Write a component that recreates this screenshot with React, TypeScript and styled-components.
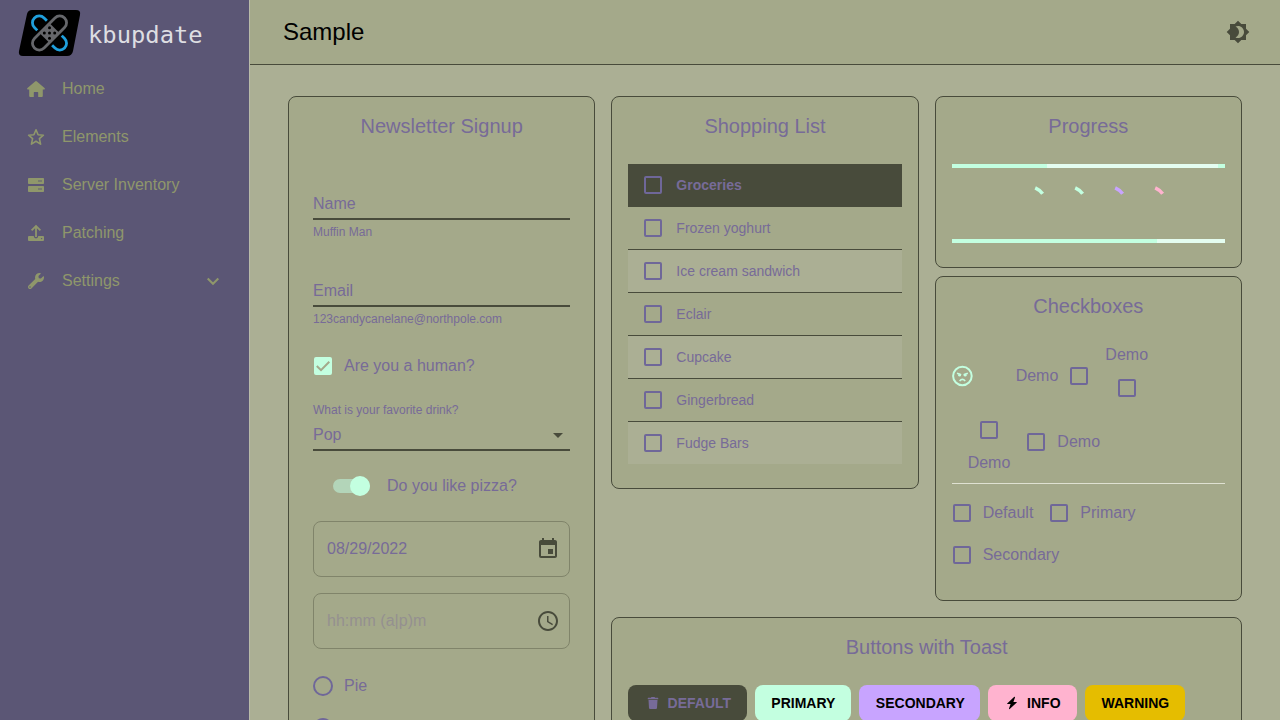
import React from "react";
import styled, { createGlobalStyle } from "styled-components";
import { MdBrightness4, MdEvent, MdAccessTime, MdArrowDropDown } from "react-icons/md";
import { FaWrench, FaTrash } from "react-icons/fa";

const c = {
  side: "#5b5675",
  sideText: "#8f976b",
  page: "#abaf94",
  card: "#a4a98a",
  dark: "#484b3b",
  text: "#776b98",
  control: "#6f6799",
  mint: "#c3ffe0",
  violet: "#c8a4ff",
  pink: "#ffb3cf",
};

const Global = createGlobalStyle`
  * { box-sizing: border-box; }
  body { margin: 0; background: ${c.page}; font-family: "Liberation Sans", Arial, sans-serif; overflow: hidden; }
`;

const Shell = styled.div`
  display: flex;
  height: 720px;
  overflow: hidden;
  color: ${c.text};
  font-size: 16px;
  line-height: 24px;
`;

const Sidebar = styled.aside`
  width: 250px;
  flex: none;
  background: ${c.side};
  border-right: 1px solid #b9bba9;
`;

const Brand = styled.div`
  display: flex;
  align-items: center;
  gap: 7px;
  height: 65px;
  padding: 1px 0 0 18px;
  color: #dedee2;
  font: 23.8px/28px "DejaVu Sans Mono", monospace;
`;

const BrandName = styled.span`
  padding-top: 3px;
`;

const NavItem = styled.div`
  display: flex;
  align-items: center;
  height: 48px;
  padding: 0 27px 0 26px;
  color: ${c.sideText};
  svg { flex: none; }
`;

const NavLabel = styled.span`
  flex: 1;
  padding-left: 16px;
`;

const IconSlot = styled.span`
  display: flex;
  align-items: center;
  justify-content: center;
  width: 20px;
  height: 20px;
`;

const Main = styled.main`
  flex: 1;
  min-width: 0;
`;

const TopBar = styled.header`
  display: flex;
  align-items: center;
  justify-content: space-between;
  height: 65px;
  padding: 0 30px 1px 33px;
  background: ${c.card};
  border-bottom: 1px solid ${c.dark};
  color: #000;
  font-size: 24px;
  svg { color: ${c.dark}; }
`;

const Board = styled.div`
  display: grid;
  grid-template-columns: 307.33px 630.67px;
  gap: 16px;
  align-items: start;
  padding: 31px 38px 0;
`;

const Right = styled.div`
  display: flex;
  flex-direction: column;
  gap: 16px;
`;

const Pair = styled.div`
  display: grid;
  grid-template-columns: 1fr 1fr;
  gap: 16px;
  align-items: start;
`;

const Stack = styled.div`
  display: flex;
  flex-direction: column;
  gap: 8px;
`;

const Card = styled.section<{ $h: number; $pad?: number }>`
  height: ${(p) => p.$h}px;
  padding: 13px ${(p) => p.$pad ?? 16}px 0;
  background: ${c.card};
  border: 1px solid ${c.dark};
  border-radius: 8px;
`;

const CardTitle = styled.h2<{ $gap?: number }>`
  margin: 0 0 ${(p) => p.$gap ?? 22}px;
  font-size: 20px;
  font-weight: 400;
  line-height: 32px;
  text-align: center;
`;

const Field = styled.div`
  height: 87px;
  padding-top: 27px;
`;

const FieldLine = styled.div`
  display: flex;
  justify-content: space-between;
  align-items: center;
  height: 29px;
  padding-bottom: 2px;
  border-bottom: 2px solid ${c.dark};
  svg { color: ${c.dark}; }
`;

const Small = styled.div`
  padding: 2px 0;
  font-size: 12px;
  line-height: 20px;
`;

const HumanRow = styled.div`
  display: flex;
  padding: 7px 0 11px;
`;

const RadioGroup = styled.div`
  display: flex;
  flex-direction: column;
  padding-top: 16px;
`;

const Choice = styled.label<{ $place?: "end" | "start" | "top" | "bottom" }>`
  display: inline-flex;
  align-items: center;
  flex-direction: ${(p) =>
    ({ end: "row", start: "row-reverse", top: "column-reverse", bottom: "column" })[p.$place ?? "end"]};
  margin: ${(p) =>
    ({ end: "0 16px 0 -11px", start: "0 -11px 0 17px", top: "0 16px", bottom: "0 16px" })[p.$place ?? "end"]};
`;

const Hit = styled.span`
  display: flex;
  align-items: center;
  justify-content: center;
  width: 42px;
  height: 42px;
`;

const Box = styled.span<{ $on?: boolean }>`
  display: flex;
  width: 18px;
  height: 18px;
  border: 2px solid ${(p) => (p.$on ? c.mint : c.control)};
  border-radius: 2px;
  background: ${(p) => (p.$on ? c.mint : "transparent")};
`;

const Radio = styled.span`
  width: 20px;
  height: 20px;
  border: 2px solid ${c.control};
  border-radius: 50%;
`;

const SwitchRow = styled.div`
  display: flex;
  align-items: center;
  gap: 17px;
  height: 38px;
  margin-top: 16px;
  padding-left: 20px;
`;

const Track = styled.span`
  display: flex;
  align-items: center;
  justify-content: flex-end;
  width: 37px;
  height: 14px;
  border-radius: 7px;
  background: #b3d5b9;
`;

const Thumb = styled.span`
  width: 20px;
  height: 20px;
  flex: none;
  border-radius: 50%;
  background: ${c.mint};
`;

const Outlined = styled.div<{ $empty?: boolean }>`
  display: flex;
  align-items: center;
  justify-content: space-between;
  height: 56px;
  margin-top: 16px;
  padding: 0 9px 0 13px;
  border: 1px solid #80846a;
  border-radius: 8px;
  color: ${(p) => (p.$empty ? "#949090" : c.text)};
  svg { color: ${c.dark}; }
`;

const ListRow = styled.div<{ $alt?: boolean; $head?: boolean }>`
  display: flex;
  align-items: center;
  gap: 14px;
  height: 43px;
  padding-left: 16px;
  font-size: 14px;
  font-weight: ${(p) => (p.$head ? 700 : 400)};
  background: ${(p) => (p.$head ? c.dark : p.$alt ? c.page : "transparent")};
  border-bottom: 1px solid ${c.dark};
  &:last-child { height: 42px; border-bottom: 0; }
`;

const Bar = styled.div`
  display: flex;
  height: 4px;
  background: #e4fdf0;
`;

const Fill = styled.span<{ $w: number }>`
  width: ${(p) => p.$w}px;
  background: ${c.mint};
`;

const Spring = styled.span`
  flex: 1;
`;

const Spinners = styled.div`
  display: flex;
  justify-content: center;
  height: 40px;
  margin: 16px 0 15px;
`;

const Choices = styled.div`
  display: flex;
  flex-wrap: wrap;
`;

const Divider = styled.div`
  height: 1px;
  margin: 8px 0;
  background: #dfe1d2;
`;

const Buttons = styled.div`
  display: flex;
  gap: 8px;
`;

const Button = styled.button<{ $bg: string; $fg?: string; $w: number; $nudge?: number }>`
  display: flex;
  align-items: center;
  justify-content: center;
  gap: 9px;
  width: ${(p) => p.$w}px;
  height: 36px;
  padding: 0 0 0 ${(p) => p.$nudge ?? 0}px;
  border: 0;
  border-radius: 8px;
  background: ${(p) => p.$bg};
  color: ${(p) => p.$fg ?? "#000"};
  font: 700 14px/24px "Liberation Sans", Arial, sans-serif;
`;

const Logo = () => (
  <svg width="63" height="48" viewBox="0 0 63 48">
    <path d="M14 1H58Q63 1 62 6L55 42Q54 47 49 47H5Q0 47 1 42L9 5Q10 1 14 1Z" fill="#000" />
    <g fill="none" strokeWidth="2.8">
      <g transform="rotate(45 31.5 24)" stroke="#1f9fdc">
        <path d="M21 17.2H17A6.8 6.8 0 0 0 17 30.8H21" />
        <path d="M42 17.2H46A6.8 6.8 0 0 1 46 30.8H42" />
      </g>
      <g transform="rotate(-45 31.5 24)" stroke="#66676b">
        <rect x="10.2" y="17.2" width="42.6" height="13.6" rx="6.8" />
        <rect x="24.5" y="17.2" width="14" height="13.6" fill="#66676b" stroke="none" />
      </g>
    </g>
    <g fill="#000">
      <circle cx="31.5" cy="18.8" r="1.5" />
      <circle cx="26.3" cy="24" r="1.5" />
      <circle cx="31.5" cy="24" r="1.5" />
      <circle cx="36.7" cy="24" r="1.5" />
      <circle cx="31.5" cy="29.2" r="1.5" />
    </g>
  </svg>
);

const HomeIcon = () => (
  <svg width="20" height="20" viewBox="0 0 20 20" fill="currentColor">
    <path d="M10 2Q10.5 2 10.9 2.4L18.8 9.3Q19.3 10.6 18 10.6H16.8V17Q16.8 18 15.8 18H12.2V13.6Q12.2 13 11.6 13H8.4Q7.8 13 7.8 13.6V18H4.2Q3.2 18 3.2 17V10.6H2Q0.7 10.6 1.2 9.3L9.1 2.4Q9.5 2 10 2Z" />
  </svg>
);

const StarIcon = () => (
  <svg width="20" height="20" viewBox="0 0 20 20" fill="none" stroke="currentColor" strokeWidth="1.6" strokeLinejoin="round">
    <path d="M10 2.8L12.1 7.7L17.4 8.2L13.4 11.7L14.6 17.1L10 14.3L5.4 17.1L6.6 11.7L2.6 8.2L7.9 7.7Z" />
  </svg>
);

const ServerIcon = () => (
  <svg width="20" height="20" viewBox="0 0 20 20">
    <rect x="2" y="3" width="16" height="6" rx="0.8" fill="currentColor" />
    <rect x="2" y="11" width="16" height="6" rx="0.8" fill="currentColor" />
    <path d="M12 5h4v2h-4zM12 13h4v2h-4z" fill="#777a6e" />
  </svg>
);

const UploadIcon = () => (
  <svg width="20" height="20" viewBox="0 0 20 20" fill="currentColor">
    <path d="M2 14Q2 13 3 13H7.7Q8 15.4 10 15.4T12.3 13H17Q18 13 18 14V17Q18 18 17 18H3Q2 18 2 17Z" />
    <path d="M10 14V3.4M5.6 7.4L10 3L14.4 7.4" fill="none" stroke="currentColor" strokeWidth="1.8" />
    <circle cx="15.6" cy="15.6" r="0.7" fill={c.side} />
  </svg>
);

const ChevronIcon = () => (
  <svg width="18" height="18" viewBox="0 0 18 18" fill="none" stroke="currentColor" strokeWidth="2">
    <path d="M3.7 6.5L9 11.8L14.3 6.5" />
  </svg>
);

const AngryIcon = () => (
  <svg width="24" height="24" viewBox="0 0 24 24" fill="none" stroke={c.mint} strokeWidth="1.6">
    <circle cx="12.4" cy="12" r="9.3" strokeWidth="2" />
    <path d="M7 9.2L11.2 10.8M17.8 9.2L13.6 10.8M9.6 17Q12.4 13.8 15.2 17" />
    <circle cx="9.6" cy="11.2" r="1.4" fill={c.mint} stroke="none" />
    <circle cx="15.2" cy="11.2" r="1.4" fill={c.mint} stroke="none" />
  </svg>
);

const BoltIcon = () => (
  <svg width="12" height="14" viewBox="0 0 12 14" fill="currentColor">
    <path d="M8.3 0.8L1.2 7.4Q0.8 8 1.6 8H4.6L3 12.6Q3 13.4 3.7 13.1L10.8 6.6Q11.2 6 10.4 6H7.4L9 1.4Q9 0.5 8.3 0.8Z" />
  </svg>
);

const Tick = () => (
  <svg width="14" height="14" viewBox="0 0 14 14" fill="none" stroke={c.card} strokeWidth="2">
    <path d="M0.8 7L5 11.2L13.3 2.8" />
  </svg>
);

const Spinner = ({ color }: { color: string }) => (
  <svg width="40" height="40" viewBox="0 0 40 40">
    <path d="M27.2 3.9A18.2 18.2 0 0 1 34.6 9.8" fill="none" stroke={color} strokeWidth="3.6" />
  </svg>
);

const nav = [
  { label: "Home", icon: <HomeIcon /> },
  { label: "Elements", icon: <StarIcon /> },
  { label: "Server Inventory", icon: <ServerIcon /> },
  { label: "Patching", icon: <UploadIcon /> },
  { label: "Settings", icon: <FaWrench size={16} />, open: true },
];

const groceries = ["Groceries", "Frozen yoghurt", "Ice cream sandwich", "Eclair", "Cupcake", "Gingerbread", "Fudge Bars"];

const Check = ({ label, place, on, icon }: {
  label?: string;
  place?: "end" | "start" | "top" | "bottom";
  on?: boolean;
  icon?: React.ReactNode;
}) => (
  <Choice $place={place}>
    <Hit>{icon ?? <Box $on={on}>{on && <Tick />}</Box>}</Hit>
    {label && <span>{label}</span>}
  </Choice>
);

export default function App() {
  return (
    <>
      <Global />
      <Shell>
        <Sidebar>
          <Brand><Logo /><BrandName>kbupdate</BrandName></Brand>
          {nav.map((n) => (
            <NavItem key={n.label}>
              <IconSlot>{n.icon}</IconSlot>
              <NavLabel>{n.label}</NavLabel>
              {n.open && <ChevronIcon />}
            </NavItem>
          ))}
        </Sidebar>
        <Main>
          <TopBar>Sample<MdBrightness4 size={24} /></TopBar>
          <Board>
            <Card $h={760} $pad={24}>
              <CardTitle>Newsletter Signup</CardTitle>
              <Field><FieldLine>Name</FieldLine><Small>Muffin Man</Small></Field>
              <Field><FieldLine>Email</FieldLine><Small>123candycanelane@northpole.com</Small></Field>
              <HumanRow><Check label="Are you a human?" on /></HumanRow>
              <Small>What is your favorite drink?</Small>
              <FieldLine>Pop<MdArrowDropDown size={24} /></FieldLine>
              <SwitchRow><Track><Thumb /></Track>Do you like pizza?</SwitchRow>
              <Outlined>08/29/2022<MdEvent size={24} /></Outlined>
              <Outlined $empty>hh:mm (a|p)m<MdAccessTime size={24} /></Outlined>
              <RadioGroup>
                <Choice><Hit><Radio /></Hit>Pie</Choice>
                <Choice><Hit><Radio /></Hit></Choice>
              </RadioGroup>
            </Card>
            <Right>
              <Pair>
                <Card $h={393}>
                  <CardTitle>Shopping List</CardTitle>
                  <div>
                    {groceries.map((g, i) => (
                      <ListRow key={g} $head={i === 0} $alt={i > 0 && i % 2 === 0}><Box />{g}</ListRow>
                    ))}
                  </div>
                </Card>
                <Stack>
                  <Card $h={172}>
                    <CardTitle>Progress</CardTitle>
                    <Bar><Fill $w={95} /><Spring /><Fill $w={7} /></Bar>
                    <Spinners>
                      {[c.mint, c.mint, c.violet, c.pink].map((color, i) => <Spinner key={i} color={color} />)}
                    </Spinners>
                    <Bar><Fill $w={205} /></Bar>
                  </Card>
                  <Card $h={325}>
                    <CardTitle $gap={21}>Checkboxes</CardTitle>
                    <Choices>
                      <Check icon={<AngryIcon />} />
                      <Check label="Demo" place="start" />
                      <Check label="Demo" place="top" />
                      <Check label="Demo" place="bottom" />
                      <Check label="Demo" />
                    </Choices>
                    <Divider />
                    <Choices>
                      <Check label="Default" />
                      <Check label="Primary" />
                      <Check label="Secondary" />
                    </Choices>
                  </Card>
                </Stack>
              </Pair>
              <Card $h={200}>
                <CardTitle>Buttons with Toast</CardTitle>
                <Buttons>
                  <Button $bg={c.dark} $fg={c.text} $w={119} $nudge={2}><FaTrash size={12} />DEFAULT</Button>
                  <Button $bg={c.mint} $w={96}>PRIMARY</Button>
                  <Button $bg={c.violet} $w={121} $nudge={1}>SECONDARY</Button>
                  <Button $bg={c.pink} $w={89} $nudge={1}><BoltIcon />INFO</Button>
                  <Button $bg="#e5bd00" $w={100}>WARNING</Button>
                </Buttons>
              </Card>
            </Right>
          </Board>
        </Main>
      </Shell>
    </>
  );
}
